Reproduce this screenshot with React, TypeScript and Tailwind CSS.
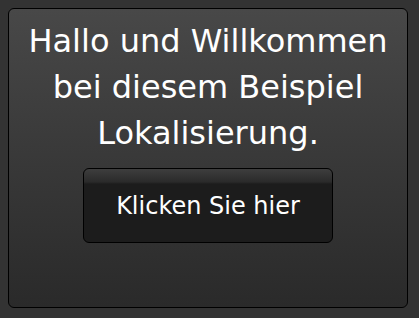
export default function App() {
  return (
    <div className="w-[419px] h-[318px] bg-[#333333] p-2 font-['DejaVu_Sans',sans-serif]">
      <div className="w-[400px] h-[300px] rounded-[6px] border border-black bg-gradient-to-b from-[#484848] to-[#2a2a2a] flex flex-col items-center pt-[9px]">
        <h1 className="text-white text-[32px] leading-[46px] text-center font-normal">
          Hallo und Willkommen
          <br />
          bei diesem Beispiel
          <br />
          Lokalisierung.
        </h1>
        <button className="mt-[12px] w-[250px] h-[75px] rounded-[6px] border border-black bg-[linear-gradient(to_bottom,#3e3e3e_0px,#2a2a2a_13px,#1c1c1c_15px,#1c1c1c_100%)] text-white text-[24px]">
          Klicken Sie hier
        </button>
      </div>
    </div>
  );
}
